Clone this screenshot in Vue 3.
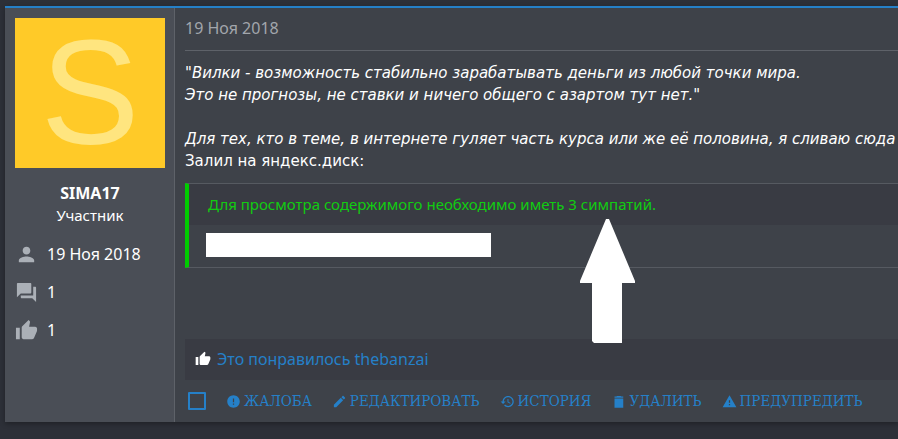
<template>
  <div class="page">
    <article class="post">
      <aside class="user">
        <div class="avatar">S</div>
        <div class="user-name">SIMA17</div>
        <div class="user-role">Участник</div>
        <ul class="stats">
          <li v-for="stat in stats" :key="stat.title" :title="stat.title">
            <svg viewBox="0 0 24 24"><path :d="stat.icon" /></svg>
            <span>{{ stat.value }}</span>
          </li>
        </ul>
      </aside>

      <div class="content">
        <header class="post-date">19 Ноя 2018</header>

        <div class="message">
          <p><em>"Вилки - возможность стабильно зарабатывать деньги из любой точки мира.</em></p>
          <p><em>Это не прогнозы, не ставки и ничего общего с азартом тут нет."</em></p>
          <p class="spaced"><em>Для тех, кто в теме, в интернете гуляет часть курса или же её половина, я сливаю сюда</em></p>
          <p>Залил на яндекс.диск:</p>
        </div>

        <div class="hidden-block">
          <div class="hidden-title">Для просмотра содержимого необходимо иметь 3 симпатий.</div>
          <div class="hidden-body">
            <div class="cover"></div>
          </div>
          <svg class="arrow" viewBox="0 0 55 124">
            <path d="M26 0h3l26 62v2H42v60H14l-2-2V64H0v-2z" />
          </svg>
        </div>

        <div class="likes">
          <svg viewBox="0 0 24 24"><path :d="thumb" /></svg>
          <a href="#">Это понравилось thebanzai</a>
        </div>

        <footer class="actions">
          <input v-model="selected" type="checkbox" aria-label="Выбрать" />
          <a v-for="action in actions" :key="action.text" href="#">
            <svg viewBox="0 0 24 24"><path :d="action.icon" /></svg>
            <span>{{ action.text }}</span>
          </a>
        </footer>
      </div>
    </article>
  </div>
</template>

<script setup>
import { ref } from 'vue'

const selected = ref(false)

const thumb = 'M1 21h4V9H1v12zm22-11c0-1.1-.9-2-2-2h-6.31l.95-4.57.03-.32c0-.41-.17-.79-.44-1.06L14.17 1 7.59 7.59C7.22 7.95 7 8.45 7 9v10c0 1.1.9 2 2 2h9c.83 0 1.54-.5 1.84-1.22l3.02-7.05c.09-.23.14-.47.14-.73v-2z'

const stats = [
  { title: 'Регистрация', value: '19 Ноя 2018', icon: 'M12 12c2.21 0 4-1.79 4-4s-1.79-4-4-4-4 1.79-4 4 1.79 4 4 4zm0 2c-2.67 0-8 1.34-8 4v2h16v-2c0-2.66-5.33-4-8-4z' },
  { title: 'Сообщения', value: 1, icon: 'M21 6h-2v9H6v2c0 .55.45 1 1 1h11l4 4V7c0-.55-.45-1-1-1zm-4 6V3c0-.55-.45-1-1-1H3c-.55 0-1 .45-1 1v14l4-4h10c.55 0 1-.45 1-1z' },
  { title: 'Симпатии', value: 1, icon: thumb }
]

const actions = [
  { text: 'ЖАЛОБА', icon: 'M12 2C6.48 2 2 6.48 2 12s4.48 10 10 10 10-4.48 10-10S17.52 2 12 2zm1 15h-2v-2h2v2zm0-4h-2V7h2v6z' },
  { text: 'РЕДАКТИРОВАТЬ', icon: 'M3 17.25V21h3.75L17.81 9.94l-3.75-3.75L3 17.25zM20.71 7.04c.39-.39.39-1.02 0-1.41l-2.34-2.34c-.39-.39-1.02-.39-1.41 0l-1.83 1.83 3.75 3.75 1.83-1.83z' },
  { text: 'ИСТОРИЯ', icon: 'M13 3c-4.97 0-9 4.03-9 9H1l3.89 3.89.07.14L9 12H6c0-3.87 3.13-7 7-7s7 3.13 7 7-3.13 7-7 7c-1.93 0-3.68-.79-4.94-2.06l-1.42 1.42C8.27 19.99 10.51 21 13 21c4.97 0 9-4.03 9-9s-4.03-9-9-9zm-1 5v5l4.28 2.54.72-1.21-3.5-2.08V8H12z' },
  { text: 'УДАЛИТЬ', icon: 'M4 22h14V7H4v15zM18 4h-3l-1-1H8L7 4H4v2h14V4z' },
  { text: 'ПРЕДУПРЕДИТЬ', icon: 'M1 21h22L12 2 1 21zm12-3h-2v-2h2v2zm0-4h-2v-4h2v4z' }
]
</script>

<style>
body {
  margin: 0;
  background: #2d3038;
}
</style>

<style scoped>
.page {
  min-height: 100vh;
  box-sizing: border-box;
  padding: 6px 0 16px 5px;
  overflow: hidden;
  font-family: 'Noto Sans', 'Open Sans', sans-serif;
  font-size: 16px;
  line-height: 22px;
  color: #fff;
}

.post {
  display: flex;
  border-top: 2px solid #2580c8;
  background: #3e4249;
  box-shadow: 0 2px 5px rgba(0, 0, 0, 0.3);
}

.user {
  flex: none;
  width: 150px;
  padding: 10px 9px 10px 10px;
  border-right: 1px solid #5e6269;
  background: #4a4e56;
}

.avatar {
  height: 150px;
  margin-bottom: 14px;
  background: #ffca28;
  color: #ffe57f;
  font-family: 'Liberation Sans', sans-serif;
  font-size: 148px;
  line-height: 150px;
  text-align: center;
}

.user-name,
.user-role {
  text-align: center;
}

.user-name {
  font-weight: bold;
}

.user-role {
  font-size: 15px;
}

.stats {
  display: flex;
  flex-direction: column;
  gap: 16px;
  margin: 17px 0 0;
  padding: 0;
  list-style: none;
}

.stats li {
  display: flex;
  align-items: center;
  gap: 9px;
  height: 22px;
}

.stats svg {
  width: 23px;
  height: 23px;
  fill: #abb0b7;
}

.content {
  flex: 1;
  min-width: 0;
  padding-left: 10px;
  white-space: nowrap;
}

.post-date {
  padding: 9px 0 11px;
  border-bottom: 1px solid #5e6269;
  color: #a2a6ac;
}

.message {
  padding: 11px 0;
  font-family: 'DejaVu Sans', sans-serif;
  font-size: 15px;
}

.message p {
  margin: 0;
}

.message .spaced {
  margin-top: 22px;
}

.hidden-block {
  position: relative;
  border: 1px solid #565a61;
  border-width: 1px 0;
  border-left: 4px solid #0c0;
}

.hidden-title {
  padding: 9px 19px 10px;
  background: #393b43;
  color: #1c1;
  font-size: 15px;
}

.hidden-body {
  padding: 8px 17px 10px;
}

.cover {
  width: 285px;
  height: 24px;
  background: #fff;
}

.arrow {
  position: absolute;
  top: 35px;
  left: 391px;
  width: 55px;
  height: 124px;
  fill: #fff;
}

.likes {
  display: flex;
  align-items: center;
  gap: 6px;
  margin-top: 71px;
  padding: 9px 10px 10px;
  background: #393b43;
}

.likes svg {
  width: 16px;
  height: 16px;
  fill: #fff;
}

a {
  color: #2580c8;
  text-decoration: none;
}

.actions {
  display: flex;
  align-items: center;
  gap: 20px;
  height: 42px;
  padding-left: 3px;
  font-family: 'DejaVu Serif Condensed', 'DejaVu Serif', serif;
  font-size: 15px;
}

.actions input {
  appearance: none;
  box-sizing: border-box;
  width: 18px;
  height: 18px;
  margin: 0;
  border: 2px solid #2580c8;
  border-radius: 1px;
}

.actions input:checked {
  background: #2580c8;
}

.actions a {
  display: flex;
  align-items: center;
  gap: 3px;
}

.actions svg {
  width: 15px;
  height: 15px;
  fill: #2580c8;
}
</style>
